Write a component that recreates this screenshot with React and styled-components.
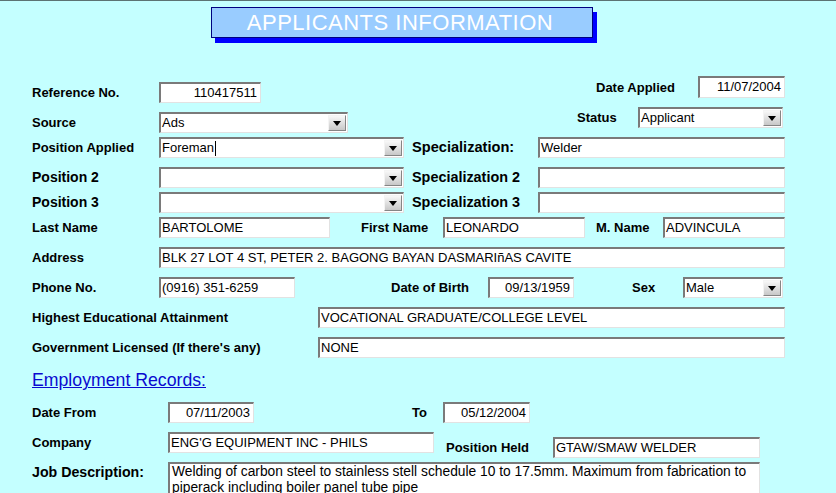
import styled, { createGlobalStyle } from "styled-components";

const GlobalStyle = createGlobalStyle`
  html, body {
    margin: 0;
    padding: 0;
    background: #c4ffff;
  }
  body {
    font-family: "Liberation Sans", Arial, sans-serif;
    color: #000;
  }
`;

const Page = styled.div`
  width: 836px;
  height: 493px;
  overflow: hidden;
  box-sizing: border-box;
  border-top: 1px solid #5b7373;
  background: #c4ffff;
`;

const Banner = styled.div`
  margin: 6px 0 0 211px;
  width: 382px;
  height: 31px;
  box-sizing: border-box;
  background: #99ccff;
  border: 1px solid #000080;
  box-shadow: 4px 5px 0 #0000ff;
  color: #fff;
  font-size: 22px;
  letter-spacing: 0.5px;
  padding-right: 4px;
  display: flex;
  align-items: center;
  justify-content: center;
`;

const Form = styled.div`
  padding-left: 32px;
  width: 753px;
`;

const Top = styled.div`
  display: flex;
  justify-content: space-between;
`;

const Column = styled.div`
  display: flex;
  flex-direction: column;
  align-items: ${(p) => (p.$end ? "flex-end" : "flex-start")};
  gap: 9px;
  margin-top: ${(p) => p.$mt}px;
`;

const Row = styled.div`
  display: flex;
  align-items: ${(p) => (p.$top ? "flex-start" : "center")};
  height: ${(p) => p.$h || 21}px;
  margin-top: ${(p) => p.$mt ?? 9}px;
  margin-right: ${(p) => p.$mr || 0}px;
`;

const Group = styled.div`
  display: flex;
  align-items: center;
  margin-top: ${(p) => p.$mt || 0}px;
`;

const Label = styled.div`
  flex: none;
  width: ${(p) => p.$w}px;
  margin-left: ${(p) => p.$ml || 0}px;
  font-weight: bold;
  font-size: ${(p) => p.$size || 13}px;
  line-height: 21px;
  white-space: nowrap;
`;

const Field = styled.div`
  flex: none;
  box-sizing: border-box;
  width: ${(p) => p.$w}px;
  height: ${(p) => p.$h || 21}px;
  margin-left: ${(p) => p.$ml || 0}px;
  background: #fff;
  border-top: 2px solid #7a7a7a;
  border-left: 2px solid #7a7a7a;
  border-right: 1px solid #e2e2e2;
  border-bottom: 1px solid #e2e2e2;
  padding: 0 3px 0 1px;
  font-size: 13px;
  line-height: 18px;
  text-align: ${(p) => (p.$right ? "right" : "left")};
  white-space: nowrap;
  overflow: hidden;
`;

const Select = styled(Field)`
  display: flex;
  align-items: center;
  padding-right: 1px;
`;

const SelectText = styled.span`
  flex: 1;
  display: flex;
  align-items: center;
`;

const Caret = styled.span`
  display: inline-block;
  width: 1px;
  height: 15px;
  background: #000;
  margin-left: 1px;
`;

const DropButton = styled.span`
  flex: none;
  box-sizing: border-box;
  width: 18px;
  height: 16px;
  border-top: 1px solid #f4f4f4;
  border-left: 1px solid #f4f4f4;
  border-right: 1px solid #858585;
  border-bottom: 1px solid #858585;
  background: linear-gradient(#f8f8f8, #c8c8c8);
  display: flex;
  align-items: center;
  justify-content: center;

  &::after {
    content: "";
    margin-top: 1px;
    border-left: 4px solid transparent;
    border-right: 4px solid transparent;
    border-top: 5px solid #000;
  }
`;

const TextArea = styled(Field)`
  height: 40px;
  white-space: normal;
  font-size: 13.8px;
  line-height: 16px;
  padding: 0 2px;
`;

const Heading = styled.div`
  margin-top: 10px;
  font-size: 17.7px;
  line-height: 24px;
  color: #0a0ad0;
  text-decoration: underline;
`;

const Dropdown = ({ w, ml, children }) => (
  <Select $w={w} $ml={ml}>
    <SelectText>{children}</SelectText>
    <DropButton />
  </Select>
);

export default function App() {
  return (
    <Page>
      <GlobalStyle />
      <Banner>APPLICANTS INFORMATION</Banner>
      <Form>
        <Top>
          <Column $mt={44}>
            <Row $mt={0}>
              <Label $w={127}>Reference No.</Label>
              <Field $w={102} $right>110417511</Field>
            </Row>
            <Row $mt={0}>
              <Label $w={127}>Source</Label>
              <Dropdown w={189}>Ads</Dropdown>
            </Row>
          </Column>
          <Column $mt={38} $end>
            <Row $mt={0} $h={22}>
              <Label $w={102}>Date Applied</Label>
              <Field $w={87} $h={22} $right>11/07/2004</Field>
            </Row>
            <Row $mt={0} $mr={2}>
              <Label $w={61}>Status</Label>
              <Dropdown w={145}>Applicant</Dropdown>
            </Row>
          </Column>
        </Top>

        <Row $mt={4}>
          <Label $w={127}>Position Applied</Label>
          <Dropdown w={245}>
            Foreman
            <Caret />
          </Dropdown>
          <Label $w={126} $ml={8} $size={14.6}>Specialization:</Label>
          <Field $w={247}>Welder</Field>
        </Row>

        <Row>
          <Label $w={127} $size={14}>Position 2</Label>
          <Dropdown w={245} />
          <Label $w={126} $ml={8} $size={14.4}>Specialization 2</Label>
          <Field $w={247} />
        </Row>

        <Row $mt={4}>
          <Label $w={127} $size={14}>Position 3</Label>
          <Dropdown w={245} />
          <Label $w={126} $ml={8} $size={14.4}>Specialization 3</Label>
          <Field $w={247} />
        </Row>

        <Row $mt={4}>
          <Label $w={127}>Last Name</Label>
          <Field $w={171}>BARTOLOME</Field>
          <Label $w={82} $ml={31}>First Name</Label>
          <Field $w={142}>LEONARDO</Field>
          <Label $w={67} $ml={11}>M. Name</Label>
          <Field $w={122}>ADVINCULA</Field>
        </Row>

        <Row>
          <Label $w={127}>Address</Label>
          <Field $w={626}>BLK 27 LOT 4 ST, PETER 2. BAGONG BAYAN DASMARIñAS CAVITE</Field>
        </Row>

        <Row>
          <Label $w={127}>Phone No.</Label>
          <Field $w={136}>(0916) 351-6259</Field>
          <Label $w={97} $ml={96}>Date of Birth</Label>
          <Field $w={86} $right>09/13/1959</Field>
          <Label $w={51} $ml={58}>Sex</Label>
          <Dropdown w={100}>Male</Dropdown>
        </Row>

        <Row>
          <Label $w={286}>Highest Educational Attainment</Label>
          <Field $w={467}>VOCATIONAL GRADUATE/COLLEGE LEVEL</Field>
        </Row>

        <Row>
          <Label $w={286}>Government Licensed (If there's any)</Label>
          <Field $w={467}>NONE</Field>
        </Row>

        <Heading>Employment Records:</Heading>

        <Row $mt={10}>
          <Label $w={136}>Date From</Label>
          <Field $w={86} $right>07/11/2003</Field>
          <Label $w={31} $ml={158}>To</Label>
          <Field $w={87} $right>05/12/2004</Field>
        </Row>

        <Row $top>
          <Label $w={136}>Company</Label>
          <Field $w={266}>ENG'G EQUIPMENT INC - PHILS</Field>
          <Group $mt={5}>
            <Label $w={107} $ml={12}>Position Held</Label>
            <Field $w={207}>GTAW/SMAW WELDER</Field>
          </Group>
        </Row>

        <Row $top $h={40}>
          <Label $w={136} $size={14.2}>Job Description:</Label>
          <TextArea $w={592}>
            Welding of carbon steel to stainless stell schedule 10 to 17.5mm. Maximum from fabrication to
            piperack including boiler panel tube pipe
          </TextArea>
        </Row>
      </Form>
    </Page>
  );
}
